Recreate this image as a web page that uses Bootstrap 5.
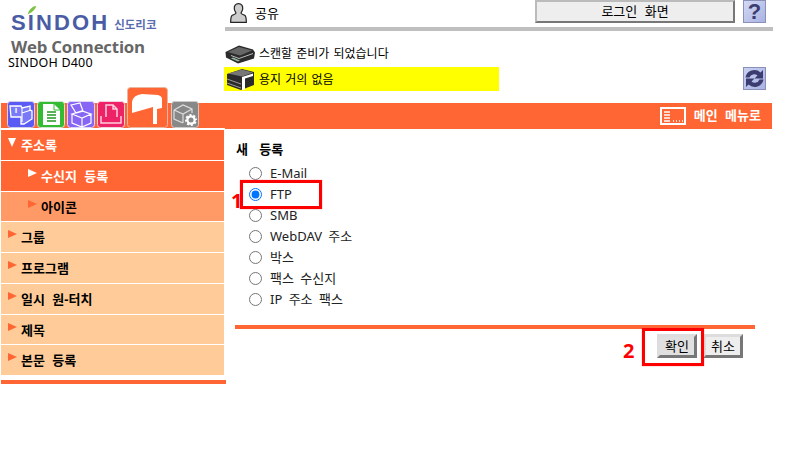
<!DOCTYPE html>
<html lang="ko">
<head>
<meta charset="utf-8">
<title>SINDOH D400</title>
<link href="https://cdn.jsdelivr.net/npm/bootstrap@5.3.0/dist/css/bootstrap.min.css" rel="stylesheet">
<style>
body{margin:0;background:#fff;color:#000;font:13px/1.2 "Noto Sans","Noto Sans CJK KR",sans-serif;word-spacing:3px;width:796px;height:458px;overflow:hidden;position:relative}
svg{flex:none;display:block}
.head-row{height:103px}
.brand-cell{width:225px;padding:11px 0 0 8px;word-spacing:0}
.logo-line{height:24px;padding-left:3px;position:relative}
.logo-main{font:bold 22px/20px "Liberation Sans",sans-serif;letter-spacing:2.1px;color:#4a5ca4}
.logo-ko{font:bold 11.5px/20px "Noto Sans CJK KR",sans-serif;color:#5a6cb0;margin-left:5px;margin-top:2px}
.logo-leaf{position:absolute;left:19px;top:-6px}
.web-conn{font:bold 16.8px/18px "Open Sans",sans-serif;color:#666;padding-left:3px;letter-spacing:-.2px;margin-top:3px}
.model{font:12.5px/14px "Noto Sans",sans-serif;letter-spacing:.2px}
.status-cell{width:548px}
.user-row{height:27px}
.user-ico{margin:3px 8px 0 5px}
.user-name{margin-top:6px}
.login-btn{width:200px;height:23px;background:#eee;border:2px solid;border-color:#bbb #777 #777 #bbb;border-radius:0;padding:0;font-size:13px;line-height:19px;color:#000;word-spacing:4px}
.square-ico{width:23px;height:23px;margin-right:7px}
.help-ico{margin-top:0;margin-left:8px}
.grey-bar{height:4px;background:#bfbfbf;margin-bottom:13px}
.msg-row{height:20px;margin-bottom:3px;font-size:12px;word-spacing:1px}
.msg-warn{width:275px;height:24px;background:#ff0;margin-left:-1px;padding-left:1px;font-size:12px;word-spacing:1px}
.msg-warn span{margin-top:2px}
.msg-ico{margin-right:3px}
.tab-band{height:26px;width:771px;margin-left:1px}
.tab-left{width:224px;height:25px;background:#f63;padding-left:6px}
.tab-right{flex:1;height:26px;background:#f63;color:#fff;font-weight:700;padding-right:11px;font-size:13px;word-spacing:4px}
.tab-ico{width:28px;height:27px;margin:-2px 2px 0 0}
.tab-on{width:41px;height:41px;margin:-16px 3px 0 0}
.side{width:225px;margin:1px 0 0 1px}
.menu-list{background:transparent;border-radius:0;gap:1px;width:223px}
.menu-list .menu-item{height:29.75px;border:0;border-radius:0;padding:7px 0 0 20px;background:#fc9;color:#000;font-weight:700;line-height:16px;position:relative;font-size:13px;word-spacing:4px}
.menu-list .menu-item.sub{padding-left:40px;background:#f96}
.menu-list .menu-item.hot{background:#f63;color:#fff}
.tri{position:absolute;left:7px;top:8px;width:0;height:0;border-style:solid;border-width:4.5px 0 4.5px 9px;border-color:transparent transparent transparent #f63}
.sub .tri{left:27px}
.hot .tri{border-left-color:#fff}
.tri.down{border-width:9px 4.5px 0 4.5px;border-color:#fff transparent transparent transparent}
.side-end{height:4px;background:#f63;margin-top:5px}
.content{width:520px;margin-left:9px;padding-top:12px}
.new-title{font-weight:700;line-height:16px;padding-left:1px;margin-bottom:6px;word-spacing:8px}
.pick-list{padding-left:14px;margin-bottom:15px}
.pick-row{height:21px;margin:0;padding:0;line-height:21px;min-height:0;font-size:13px;color:#222}
.pick-row .form-check-input{appearance:auto;-webkit-appearance:auto;float:none;width:13px;height:13px;margin:0 8px 0 0;border:0;background:none;box-shadow:none;flex:none}
.content-rule{height:4px;background:#f63;margin-bottom:5px}
.act-row{padding-right:12px;gap:6px}
.act-btn{width:40px;height:24px;padding:0;background:#e0e0e0;border:3px solid;border-color:#ddd #777 #777 #ddd;border-radius:0;font-size:13px;line-height:17px;color:#000}
.act-btn.plain{background:#eee}
.mark-box{position:absolute;border:3px solid #f00;box-shadow:0 0 1px #f66}
.mark-one{left:240px;top:180px;width:82px;height:29px}
.mark-two{left:642px;top:328px;width:62px;height:38px}
.mark-num{position:absolute;color:#f00;font:bold 20px/20px "Open Sans",sans-serif}
.num-one{left:231px;top:191px}
.num-two{left:623px;top:341px}
</style>
</head>
<body>
<div class="d-flex head-row">
  <div class="brand-cell">
    <div class="logo-line d-flex align-items-center">
      <span class="logo-main">SINDOH</span><span class="logo-ko">신도리코</span>
      <svg class="logo-leaf" width="10" height="10" viewBox="0 0 12 12"><path d="M1 11C2 6 6 2 11 1C10 6 6 9 1 11Z" fill="#7cc242"/></svg>
    </div>
    <div class="web-conn">Web Connection</div>
    <div class="model">SINDOH D400</div>
  </div>
  <div class="status-cell">
    <div class="user-row d-flex align-items-start">
      <svg class="user-ico" width="17" height="20" viewBox="0 0 17 20"><path d="M8.500.7C5.500.7 4 3 4.300 6c.2 1.700 1.200 3 1.700 4 0 1.300-2.500 1.300-4 2.500-.8.700-1.300 1.700-1.300 6.800h15.600c0-5.100-.5-6.100-1.300-6.800-1.500-1.200-4-1.200-4-2.500.5-1 1.500-2.300 1.700-4C13 3 11.500.7 8.500.7z" fill="#ccc" stroke="#222" stroke-width="1.200"/></svg>
      <span class="user-name">공유</span>
      <button type="button" class="btn login-btn ms-auto">로그인 화면</button>
      <svg class="square-ico help-ico" viewBox="0 0 23 23" role="img" aria-label="도움말"><defs><linearGradient id="g1" x1="0" y1="0" x2="1" y2="1"><stop offset="0" stop-color="#d3daf6"/><stop offset="1" stop-color="#a9b2e2"/></linearGradient></defs><rect x=".5" y=".5" width="22" height="22" fill="url(#g1)" stroke="#8a90b8"/><text x="11.500" y="19" text-anchor="middle" font-family="Liberation Sans" font-weight="700" font-size="22" fill="#3c3c70">?</text></svg>
    </div>
    <div class="grey-bar"></div>
    <div class="msg-row d-flex align-items-center">
      <svg class="msg-ico" width="31" height="20" viewBox="0 0 31 20"><path d="M.5 8L14 1.500l14 4 2 3-1 6-16 5-12-6Z" fill="#2b2b2b"/><path d="M3 8L14 3l13 3.500-12 5Z" fill="#666"/><path d="M6 11.500l8 3 14-5" fill="none" stroke="#bbb"/><path d="M6 14.500l7 3 2-1-7-3Z" fill="#8fb5a0"/></svg>
      <span>스캔할 준비가 되었습니다</span>
    </div>
    <div class="d-flex">
      <div class="msg-warn d-flex align-items-center">
        <svg class="msg-ico" width="31" height="24" viewBox="0 0 31 24"><path d="M2 7l15-5 12 3v13l-13 5-14-5Z" fill="#2b2b2b"/><path d="M3 6.500l14-4 11 3-11 4Z" fill="#777"/><path d="M2 12l14 5M2 16l14 5" stroke="#999"/><path d="M17 10l11-3.500v2.500l-8 2.500v11l-3 .5Z" fill="#fff"/></svg>
        <span>용지 거의 없음</span>
      </div>
      <svg class="square-ico ms-auto" viewBox="0 0 23 23" role="img" aria-label="새로 고침"><defs><linearGradient id="g2" x1="0" y1="0" x2="1" y2="1"><stop offset="0" stop-color="#c9d1f2"/><stop offset="1" stop-color="#a9b2e2"/></linearGradient></defs><rect x=".5" y=".5" width="22" height="22" fill="url(#g2)" stroke="#8a90b8"/><path d="M2.500 10.500a9 9 0 0 1 15-5l2.500-2.500v8.500h-8.500l3-3a5 5 0 0 0-8 2Z" fill="#3c3c70"/><path d="M20.500 12.500a9 9 0 0 1-15 5L3 20v-8.500h8.500l-3 3a5 5 0 0 0 8-2Z" fill="#3c3c70"/></svg>
    </div>
  </div>
</div>

<div class="tab-band d-flex align-items-start">
  <div class="tab-left d-flex align-items-start">
    <svg class="tab-ico" viewBox="0 0 28 27"><rect x=".5" y=".5" width="27" height="26" rx="3" fill="#5a5af5" stroke="#cfcfe8"/><path d="M3 5h11l1 2 8-2v4l2 1v8l-8 5H14v-7H4Z" fill="#7a7af8" stroke="#fff" stroke-width="1.300"/><path d="M15 7v14M15 12l9-3" stroke="#fff" stroke-width="1.100" fill="none"/><text x="9" y="12" font-family="Liberation Sans" font-weight="700" font-size="9" text-anchor="middle" fill="#fff">i</text></svg>
    <svg class="tab-ico" viewBox="0 0 28 27"><rect x=".5" y=".5" width="27" height="26" rx="3" fill="#33bb33" stroke="#cfe8cf"/><path d="M6 3h11l6 6v15H6Z" fill="#fff"/><path d="M17 3v6h6" fill="none" stroke="#33bb33"/><path d="M10 11h9M10 14h9M10 17h9M10 20h9" stroke="#229922" stroke-width="1.400"/></svg>
    <svg class="tab-ico" viewBox="0 0 28 27"><rect x=".5" y=".5" width="27" height="26" rx="3" fill="#8866f5" stroke="#ddd5f5"/><path d="M5 13l10 4 9-4-9-3ZM5 13v9l10 4v-9M15 26l9-4v-9M4 4l9-2 3 8-7 2Z" fill="none" stroke="#fff" stroke-width="1.200"/></svg>
    <svg class="tab-ico" viewBox="0 0 28 27"><rect x=".5" y=".5" width="27" height="26" rx="3" fill="#ee2266" stroke="#f5d0dd"/><path d="M9 16V4h7l4 4v8M16 4v4h4M4 15v7h20v-7" fill="none" stroke="#ffd0dd" stroke-width="1.500"/></svg>
    <svg class="tab-on" viewBox="0 0 41 41"><rect x=".5" y=".5" width="40" height="40" rx="3" fill="#f63" stroke="#e8b8a0"/><path d="M5 26V15Q6 8 15 7L31 8Q35 9 35 12V21L30 22V37H26V20L5 26Z" fill="#fff"/></svg>
    <svg class="tab-ico" viewBox="0 0 28 27"><rect x=".5" y=".5" width="27" height="26" rx="3" fill="#888" stroke="#ccc"/><path d="M3 9l9-5 9 4v4M3 9v9l9 4M3 9l9 4 9-5M12 13v9" fill="none" stroke="#ddd" stroke-width="1.200"/><circle cx="20" cy="19" r="6" fill="#fff" stroke="#888" stroke-width="0"/><circle cx="20" cy="19" r="5.500" fill="none" stroke="#888" stroke-width="1.500" stroke-dasharray="2 2.300"/><circle cx="20" cy="19" r="2.500" fill="#888"/></svg>
  </div>
  <div class="tab-right d-flex align-items-center justify-content-end">
    <svg class="me-2" width="26" height="18" viewBox="0 0 26 18"><rect x="1" y="1" width="24" height="16" fill="none" stroke="#fff" stroke-width="2"/><path d="M4 5h6M4 8h6M4 11h6M4 14h6M13 14h1M16 14h1M19 14h1M22 14h1" stroke="#fff" stroke-width="1.500"/></svg>
    <span>메인 메뉴로</span>
  </div>
</div>

<div class="d-flex">
  <div class="side">
    <div class="list-group menu-list">
      <div class="list-group-item menu-item hot"><span class="tri down"></span>주소록</div>
      <div class="list-group-item menu-item sub hot"><span class="tri"></span>수신지 등록</div>
      <div class="list-group-item menu-item sub"><span class="tri"></span>아이콘</div>
      <div class="list-group-item menu-item"><span class="tri"></span>그룹</div>
      <div class="list-group-item menu-item"><span class="tri"></span>프로그램</div>
      <div class="list-group-item menu-item"><span class="tri"></span>일시 원-터치</div>
      <div class="list-group-item menu-item"><span class="tri"></span>제목</div>
      <div class="list-group-item menu-item"><span class="tri"></span>본문 등록</div>
    </div>
    <div class="side-end"></div>
  </div>
  <div class="content">
    <div class="new-title">새 등록</div>
    <div class="pick-list">
      <label class="form-check pick-row d-flex align-items-center"><input class="form-check-input" type="radio" name="addr">E-Mail</label>
      <label class="form-check pick-row d-flex align-items-center"><input class="form-check-input" type="radio" name="addr" checked>FTP</label>
      <label class="form-check pick-row d-flex align-items-center"><input class="form-check-input" type="radio" name="addr">SMB</label>
      <label class="form-check pick-row d-flex align-items-center"><input class="form-check-input" type="radio" name="addr">WebDAV 주소</label>
      <label class="form-check pick-row d-flex align-items-center"><input class="form-check-input" type="radio" name="addr">박스</label>
      <label class="form-check pick-row d-flex align-items-center"><input class="form-check-input" type="radio" name="addr">팩스 수신지</label>
      <label class="form-check pick-row d-flex align-items-center"><input class="form-check-input" type="radio" name="addr">IP 주소 팩스</label>
    </div>
    <div class="content-rule"></div>
    <div class="act-row d-flex justify-content-end">
      <button type="button" class="btn act-btn">확인</button>
      <button type="button" class="btn act-btn plain">취소</button>
    </div>
  </div>
</div>

<div class="mark-box mark-one"></div>
<div class="mark-num num-one">1</div>
<div class="mark-box mark-two"></div>
<div class="mark-num num-two">2</div>
<script src="https://cdn.jsdelivr.net/npm/bootstrap@5.3.0/dist/js/bootstrap.bundle.min.js"></script>
</body>
</html>
